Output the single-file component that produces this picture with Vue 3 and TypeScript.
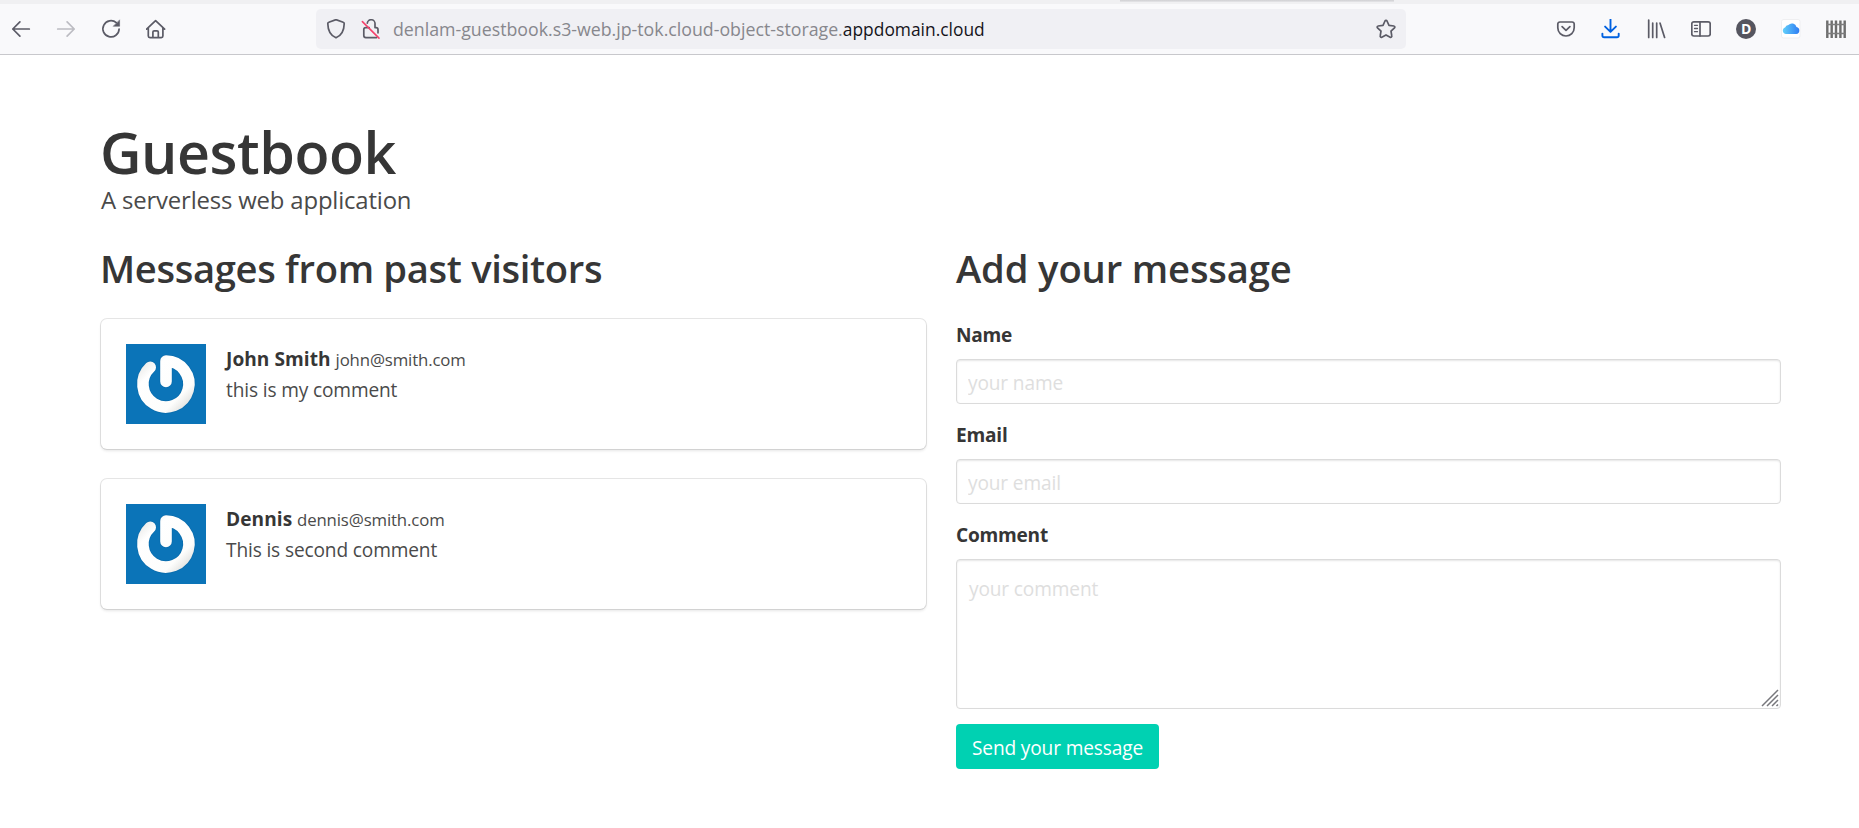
<script setup lang="ts">
import { ref } from 'vue'

interface Message {
  name: string
  email: string
  comment: string
}

const messages: Message[] = [
  { name: 'John Smith', email: 'john@smith.com', comment: 'this is my comment' },
  { name: 'Dennis', email: 'dennis@smith.com', comment: 'This is second comment' },
]

const name = ref('')
const email = ref('')
const comment = ref('')
</script>

<template>
  <div class="page">
    <header class="browser">
      <div class="tab-strip"><span class="tab-edge"></span></div>
      <div class="toolbar">
        <nav class="icons">
          <svg viewBox="0 0 20 20"><path d="M18.3 10H1.8M8.9 2.9L1.8 10l7.1 7.1" /></svg>
          <svg viewBox="0 0 20 20" class="faded"><path d="M1.7 10h16.5M11.1 2.9l7.1 7.1-7.1 7.1" /></svg>
          <svg viewBox="0 0 20 20">
            <path d="M15.3 3.7A8.1 8.1 0 1 0 18.1 10" />
            <path d="M18.6 1.2v6.1h-6.1z" class="solid" />
          </svg>
          <svg viewBox="0 0 20 20">
            <path d="M.6 10.2L9.6 1.6l9 8.6M2.3 9v8.1a1.6 1.6 0 0 0 1.6 1.6h11.4a1.6 1.6 0 0 0 1.6-1.6V9M6.9 18.5v-5.4a1.3 1.3 0 0 1 1.3-1.3h2.8a1.3 1.3 0 0 1 1.3 1.3v5.4" />
          </svg>
        </nav>
        <div class="url-bar">
          <svg viewBox="0 0 20 20">
            <path d="M10 .6l7.2 2.7a1.4 1.4 0 0 1 1 1.4C18.1 11.8 15.4 16.5 10 18.8 4.6 16.5 1.9 11.8 1.8 4.7a1.4 1.4 0 0 1 1-1.4z" />
          </svg>
          <svg viewBox="0 0 20 20" class="lock">
            <path d="M6.3 4.2a3.7 3.7 0 0 1 7.7.8v3.6h1a2 2 0 0 1 2 2v3.2M8.2 8.6H4.8a2 2 0 0 0-2 2v6a2 2 0 0 0 2 2H15.6" />
            <path d="M1.4 2.6l16.6 16.5" class="slash" />
          </svg>
          <span class="url"><span class="sub">denlam-guestbook.s3-web.jp-tok.cloud-object-storage.</span><span class="domain">appdomain.cloud</span></span>
          <svg viewBox="0 0 20 20" class="star">
            <path d="M10 1.3c.5 0 .8.3 1 .7l2 4.3 4.9.7c.9.1 1.3 1.1.6 1.8l-3.5 3.4.8 4.8c.2.9-.8 1.6-1.6 1.2L10 15.9l-4.2 2.3c-.8.4-1.8-.3-1.6-1.2l.8-4.8-3.5-3.4c-.7-.7-.3-1.7.6-1.8L7 6.3 9 2c.2-.4.5-.7 1-.7z" />
          </svg>
        </div>
        <nav class="icons">
          <svg viewBox="0 0 20 20">
            <path d="M3.8 3h12.4A2 2 0 0 1 18.2 5v3.8a8.2 8.2 0 0 1-16.4 0V5a2 2 0 0 1 2-2z" />
            <path d="M6.1 7.7L10 11.4l3.9-3.7" />
          </svg>
          <svg viewBox="0 0 20 20" class="active">
            <path d="M9.5.2v12.6M4.1 7.6l5.4 5.3 5.4-5.3M1.4 14.6v1.8a1.8 1.8 0 0 0 1.8 1.8h12.7a1.8 1.8 0 0 0 1.8-1.8v-1.8" />
          </svg>
          <svg viewBox="0 0 20 20"><path d="M2.7 1v17.5M6.7 4v14.5M10.7 4v14.5M14 4l4.6 14.5" /></svg>
          <svg viewBox="0 0 20 20">
            <rect x=".8" y="2.8" width="18.4" height="14.2" rx="2" />
            <path d="M9 2.8V17" />
            <path d="M3.5 6.3h3M3.5 9.5h3M3.5 12.7h3" class="thin" />
          </svg>
          <span class="avatar">D</span>
          <svg viewBox="0 0 20 20">
            <defs>
              <linearGradient id="cloud" x1="0" y1="0" x2="1" y2="0">
                <stop offset="0" stop-color="#63d0fa" />
                <stop offset="1" stop-color="#2f7df3" />
              </linearGradient>
            </defs>
            <rect x=".5" y=".5" width="18.5" height="18.5" rx="2" class="tile" />
            <path d="M5 15a3.4 3.4 0 0 1-.9-6.6 3.6 3.6 0 0 1 3.3-2.4 4.7 4.7 0 0 1 8.1 2.1 3.5 3.5 0 0 1-.2 6.900z" class="cloud" />
          </svg>
          <svg viewBox="0 0 20 20">
            <path d="M1.3 1.5v17.5M5.7 1.5v17.5M10 1.5v17.5M14.4 1.5v17.5M18.7 1.5v17.5" class="fence" />
            <path d="M0 5.5h20M0 14.5h20" class="rail" />
          </svg>
        </nav>
      </div>
    </header>

    <main class="section">
      <h1 class="title">Guestbook</h1>
      <p class="subtitle">A serverless web application</p>
      <div class="columns">
        <section>
          <h2 class="heading tight">Messages from past visitors</h2>
          <article v-for="m in messages" :key="m.email" class="box">
            <svg class="gravatar" viewBox="0 0 80 80">
              <defs>
                <linearGradient id="ring" x1="0" y1="0" x2="1" y2="1">
                  <stop offset="0" stop-color="#e9e9e7" />
                  <stop offset=".22" stop-color="#fff" />
                  <stop offset=".78" stop-color="#fdfdfc" />
                  <stop offset="1" stop-color="#dededb" />
                </linearGradient>
              </defs>
              <rect width="80" height="80" fill="#0b74b8" />
              <path d="M24.2 23.2A23 23 0 1 0 40 17V37.500" class="glow" />
              <path d="M24.2 23.2A23 23 0 1 0 40 17V37.500" class="power" />
            </svg>
            <div class="content">
              <p><strong>{{ m.name }}</strong> <small>{{ m.email }}</small></p>
              <p>{{ m.comment }}</p>
            </div>
          </article>
        </section>
        <section>
          <h2 class="heading">Add your message</h2>
          <form @submit.prevent>
            <label for="name">Name</label>
            <input id="name" v-model="name" type="text" placeholder="your name" />
            <label for="email">Email</label>
            <input id="email" v-model="email" type="text" placeholder="your email" />
            <label for="comment">Comment</label>
            <div class="area">
              <textarea id="comment" v-model="comment" placeholder="your comment"></textarea>
              <svg class="grip" viewBox="0 0 18 18"><path d="M1 17L17 1M6 17L17 6M11 17l6-6M15.5 17l1.5-1.5" /></svg>
            </div>
            <button type="submit">Send your message</button>
          </form>
        </section>
      </div>
    </main>
  </div>
</template>

<style>
body {
  margin: 0;
  background: #fff;
}
</style>

<style scoped>
.page {
  height: 828px;
  overflow: hidden;
  box-sizing: border-box;
  background: #fff;
  color: #4a4a4a;
  font-family: "Open Sans", "Noto Sans", sans-serif;
  font-size: 19.1px;
  line-height: 30px;
  letter-spacing: -0.007em;
}
.page * {
  box-sizing: border-box;
}
h1,
h2,
p {
  margin: 0;
}

.browser {
  height: 55px;
  background: #f9f9fb;
  border-bottom: 1px solid #c8c8cc;
}
.tab-strip {
  height: 4px;
  padding-left: 1120px;
  background: #f0f0f2;
}
.tab-edge {
  display: block;
  width: 274px;
  height: 2px;
  background: linear-gradient(#cfcfd2, #e6e6e9);
}
.toolbar {
  display: flex;
  align-items: center;
  justify-content: space-between;
  height: 50px;
  padding: 0 13px 0 11px;
}
.icons {
  display: flex;
  gap: 25px;
}
.toolbar svg {
  display: block;
  flex: none;
  width: 20px;
  height: 20px;
  fill: none;
  stroke: #5b5b66;
  stroke-width: 1.7;
  stroke-linecap: round;
  stroke-linejoin: round;
}
.toolbar .faded {
  stroke: #bcbcc2;
}
.toolbar .active {
  stroke: #0061e0;
  stroke-width: 1.9;
}
.toolbar .solid {
  fill: #5b5b66;
  stroke-width: 0.5;
}
.toolbar .slash {
  stroke: #f4426c;
  stroke-width: 1.6;
}
.toolbar .thin {
  stroke-width: 1.3;
}
.toolbar .tile {
  fill: #fff;
  stroke: #efeff1;
  stroke-width: 1;
}
.toolbar .cloud {
  fill: url(#cloud);
  stroke: none;
}
.toolbar .fence {
  stroke: #6d6d6d;
  stroke-width: 2.4;
  stroke-linecap: butt;
}
.toolbar .rail {
  stroke: #7d7d7d;
  stroke-width: 1.6;
  stroke-linecap: butt;
}
.avatar {
  width: 20px;
  height: 20px;
  border-radius: 50%;
  background: #55555f;
  color: #fff;
  font-size: 14px;
  font-weight: 700;
  line-height: 20px;
  text-align: center;
}
.url-bar {
  display: flex;
  align-items: center;
  width: 1090px;
  height: 40px;
  margin-right: auto;
  padding: 0 10px;
  border-radius: 5px;
  background: #f0f0f4;
}
.icons:first-child {
  margin-right: 150px;
}
.url-bar .lock {
  margin-left: 15px;
}
.url {
  margin-left: 12px;
  padding-bottom: 1px;
  white-space: nowrap;
  letter-spacing: 0;
}
.sub {
  color: #87878d;
  font-size: 17.75px;
}
.domain {
  color: #15141a;
  font-size: 17.4px;
}
.star {
  margin-left: auto;
}

.section {
  padding: 64px 78px 0 101px;
}
.title {
  color: #363636;
  font-size: 57.3px;
  font-weight: 600;
  line-height: 67.5px;
  letter-spacing: -0.008em;
  text-indent: -1px;
}
.subtitle {
  margin-top: -2.5px;
  font-size: 23.9px;
  line-height: 31px;
  letter-spacing: -0.007em;
}
.columns {
  display: grid;
  grid-template-columns: 825px 825px;
  gap: 30px;
  margin-top: 31px;
}
.heading {
  margin-bottom: 28px;
  color: #363636;
  font-size: 38.2px;
  font-weight: 600;
  line-height: 45px;
  letter-spacing: -0.004em;
}
.tight {
  letter-spacing: -0.009em;
  text-indent: -1px;
}
.box {
  display: flex;
  gap: 20px;
  height: 130px;
  margin-bottom: 30px;
  padding: 25px;
  border-radius: 6px;
  background: #fff;
  box-shadow: 0 2px 3px rgba(10, 10, 10, 0.1), 0 0 0 1px rgba(10, 10, 10, 0.1);
}
.gravatar {
  flex: none;
  width: 80px;
  height: 80px;
}
.power,
.glow {
  fill: none;
  stroke: url(#ring);
  stroke-width: 11.6;
  stroke-linecap: round;
  stroke-linejoin: round;
}
.glow {
  stroke: #075f9b;
  stroke-opacity: 0.35;
  stroke-width: 13;
}
strong {
  color: #363636;
  font-weight: 700;
  letter-spacing: 0.003em;
}
small {
  font-size: 16.8px;
}

form {
  display: flex;
  flex-direction: column;
  align-items: stretch;
}
label {
  height: 40px;
  padding-top: 1px;
  color: #363636;
  font-weight: 700;
  letter-spacing: -0.012em;
}
input,
textarea {
  display: block;
  width: 100%;
  margin: 0;
  border: 1px solid #dbdbdb;
  border-radius: 4px;
  outline: none;
  background: #fff;
  box-shadow: inset 0 1px 2px rgba(10, 10, 10, 0.1);
  color: #363636;
  font: inherit;
  letter-spacing: inherit;
}
input {
  height: 45px;
  margin-bottom: 15px;
  padding: 2px 11px 0;
}
textarea {
  height: 150px;
  padding: 14px 12px;
  resize: none;
}
input::placeholder,
textarea::placeholder {
  color: #dedede;
  opacity: 1;
}
.area {
  position: relative;
  margin-bottom: 15px;
}
.grip {
  position: absolute;
  right: 2px;
  bottom: 2px;
  width: 18px;
  height: 18px;
  fill: none;
  stroke: #77777c;
  stroke-width: 1.5;
}
button {
  align-self: flex-start;
  width: 203px;
  height: 45px;
  padding: 2px 0 0;
  border: 0;
  border-radius: 4px;
  background: #00d1b2;
  color: #fff;
  font: inherit;
  letter-spacing: inherit;
}
</style>
